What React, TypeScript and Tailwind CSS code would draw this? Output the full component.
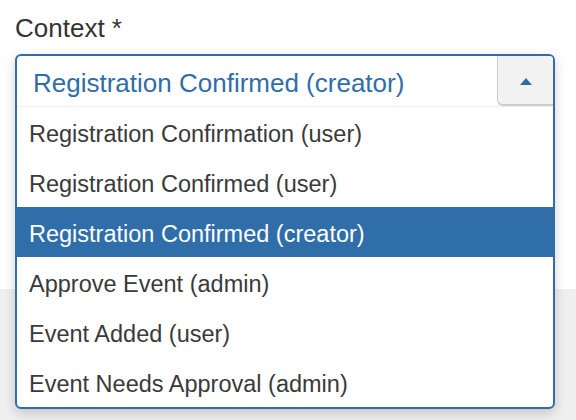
import { useState } from "react";

const options = [
  "Registration Confirmation (user)",
  "Registration Confirmed (user)",
  "Registration Confirmed (creator)",
  "Approve Event (admin)",
  "Event Added (user)",
  "Event Needs Approval (admin)",
];

export default function App() {
  const [selected, setSelected] = useState(2);

  return (
    <div
      className="h-[420px] w-[576px] flex flex-col bg-white overflow-hidden"
      style={{ fontFamily: '"Liberation Sans", Arial, sans-serif' }}
    >
      <div className="h-[289px] pl-[15px] pr-[21px] pt-[13px]">
        <label className="block text-[26px] leading-[30px] text-[#333]">
          Context *
        </label>
        <div className="relative mt-[11px] h-[54px]">
          <div className="absolute left-0 right-0 top-0 z-10 rounded-md border-2 border-[#2f6ea8] bg-white shadow-[0_4px_12px_rgba(0,0,0,0.18)] overflow-hidden">
            <div className="flex h-[51px] border-b border-[#f0f0f0]">
              <div className="flex-1 flex items-center pl-[16px] pt-[4px] text-[26px] text-[#2f6ea8]">
                {options[selected]}
              </div>
              <div className="w-[56px] flex items-center justify-center pt-[2px] bg-[#f2f2f2] border-l border-b-2 border-[#cccccc] rounded-bl-md">
                <svg width="12" height="7" viewBox="0 0 12 7">
                  <path d="M0 7 L6 0 L12 7 Z" fill="#2f6ea8" />
                </svg>
              </div>
            </div>
            <ul>
              {options.map((opt, i) => (
                <li
                  key={opt}
                  onClick={() => setSelected(i)}
                  className={
                    i === selected
                      ? "h-[50px] flex items-center pl-[12px] pt-[5px] text-[23.5px] bg-[#2f6ea8] text-white cursor-pointer"
                      : "h-[50px] flex items-center pl-[12px] pt-[5px] text-[23.5px] text-[#3a3a3a] cursor-pointer"
                  }
                >
                  {opt}
                </li>
              ))}
            </ul>
          </div>
        </div>
      </div>
      <div className="flex-1 bg-[#efefef]" />
    </div>
  );
}
